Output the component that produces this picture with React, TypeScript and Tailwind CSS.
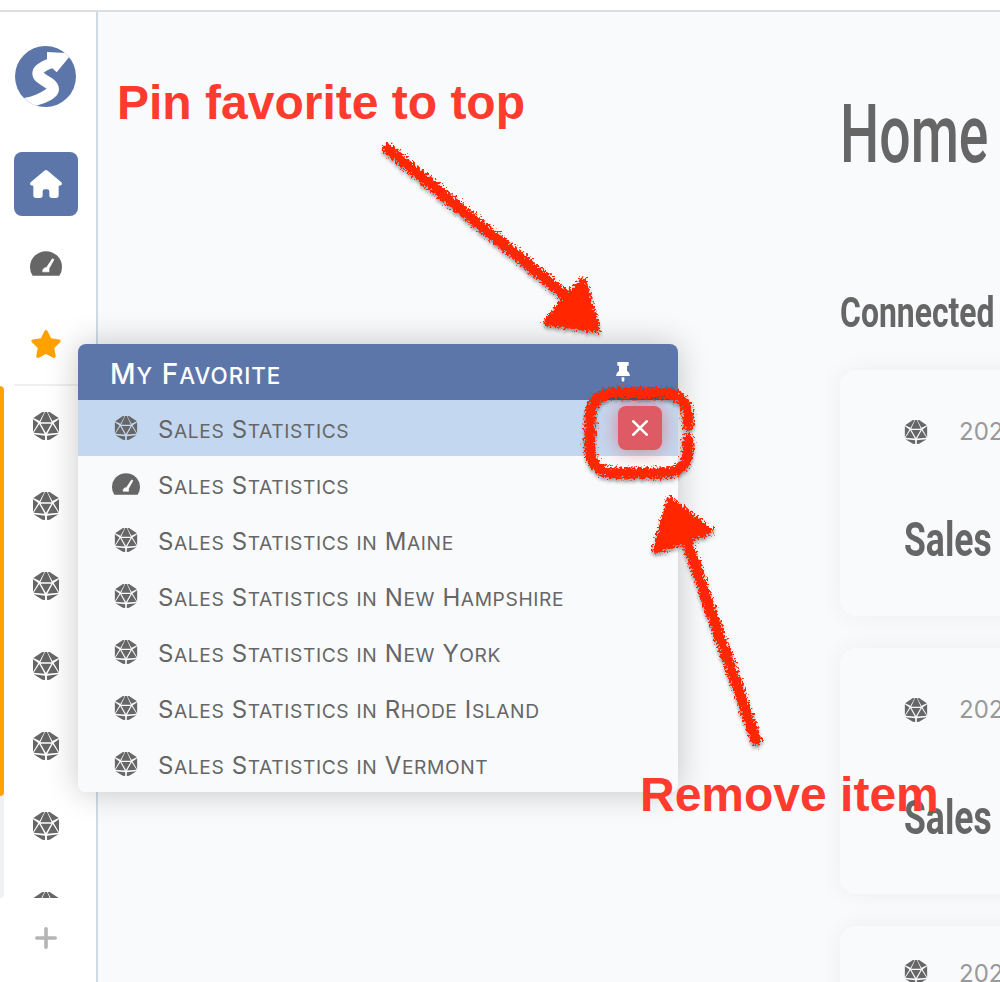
import React from "react";
import { FaStar } from "react-icons/fa";

function Logo() {
  return (
    <svg viewBox="0 0 183 183" className="h-[61px] w-[61px]">
      <defs>
        <clipPath id="disc"><circle cx="91.5" cy="91.5" r="91.5" /></clipPath>
      </defs>
      <g clipPath="url(#disc)">
        <rect width="183" height="183" fill="#5d76aa" />
        <path
          d="M27 156C52 151 74 143 95 128C70 112 52 104 52 82C52 60 76 48 96 40V18L152 21L185 0V20L162 34L125 79L112 67C103 70 94 74 86 80C108 96 132 104 132 130C132 155 98 170 65 179L60 200L0 180Z"
          fill="#fff"
        />
      </g>
    </svg>
  );
}

function HomeIcon() {
  return (
    <svg viewBox="0 0 96 84" className="h-7 w-8" fill="#fff">
      <path d="M43 2Q48 -2 53 2L94 37Q97 40 95 44Q93 47 86 47V76Q86 84 78 84H66Q58 84 58 76V64Q58 58 52 58H44Q38 58 38 64V76Q38 84 30 84H18Q10 84 10 76V47Q3 47 1 44Q-1 40 2 37Z" />
    </svg>
  );
}

const DICE_SIDE =
  "M28 0L34 1L20 27L1 18ZM0 22L16 33L0 60ZM19 36L35 65L2 62ZM2 67L36 71V84L28 83Z";

function Dice({ className }: { className: string }) {
  return (
    <svg viewBox="0 0 78 84" className={className} fill="#666">
      <path d="M36 0H42L56 31H22Z" />
      <path d="M23 35H55L39 63Z" />
      <path d={DICE_SIDE} />
      <path d={DICE_SIDE} transform="translate(78 0) scale(-1 1)" />
    </svg>
  );
}

function Gauge({ className }: { className: string }) {
  return (
    <svg viewBox="0 0 96 74" className={className}>
      <path d="M8 74Q0 62 0 48A48 48 0 0 1 96 48Q96 62 88 74Z" fill="#666" />
      <path d="M67 23L72 25L57 52V62H38Q37 54 44 50H49Z" fill="#fff" stroke="#fff" strokeWidth="2" strokeLinejoin="round" />
    </svg>
  );
}

function Pin() {
  return (
    <svg viewBox="0 0 42 60" className="h-5 w-3.5" fill="#fff">
      <path d="M4 0H38V11H33V26Q42 32 42 42H0Q0 32 9 26V11H4Z" />
      <path d="M17 46H25V56L21 60L17 56Z" />
    </svg>
  );
}

function SmallCaps({ text }: { text: string }) {
  return (
    <>
      {text.split(" ").map((word, i) => (
        <React.Fragment key={i}>
          {i > 0 && " "}
          <span
            className={
              word === "in"
                ? "inline-block text-[0.8em] uppercase"
                : "inline-block text-[0.8em] uppercase first-letter:text-[1.25em]"
            }
          >
            {word}
          </span>
        </React.Fragment>
      ))}
    </>
  );
}

const favorites = [
  "Sales Statistics",
  "Sales Statistics",
  "Sales Statistics in Maine",
  "Sales Statistics in New Hampshire",
  "Sales Statistics in New York",
  "Sales Statistics in Rhode Island",
  "Sales Statistics in Vermont",
];

function Sidebar() {
  return (
    <nav className="flex w-[98px] shrink-0 flex-col border-r-2 border-[#cfdae4] bg-white">
      <div className="flex h-[140px] pl-[15px] pt-[34px]"><Logo /></div>
      <div className="ml-3.5 flex h-16 w-16 items-center justify-center rounded-lg bg-[#5d76aa]"><HomeIcon /></div>
      <div className="ml-3.5 mt-4 flex h-16 w-16 items-center justify-center pb-px"><Gauge className="h-[25px] w-8" /></div>
      <div className="ml-3.5 mt-4 flex h-16 w-16 items-center justify-center"><FaStar className="h-7 w-[32px] text-[#ffa200]" /></div>
      <div className="ml-3.5 mt-2 h-0.5 bg-[#eff0f1]" />
      <div className="flex h-[512px] overflow-hidden">
        <div className="h-full w-1 shrink-0 overflow-hidden rounded-r bg-[#f0f1f3]">
          <div className="h-[410px] rounded-r bg-[#ffa200]" />
        </div>
        <div className="flex flex-col pl-2.5">
          {[0, 1, 2, 3, 4, 5, 6].map((i) => (
            <div key={i} className="flex h-20 w-16 shrink-0 items-center justify-center">
              <Dice className="h-7 w-[26px]" />
            </div>
          ))}
        </div>
      </div>
      <div className="ml-3.5 flex h-20 w-16 items-center justify-center">
        <svg viewBox="0 0 22 22" className="h-[22px] w-[22px]" stroke="#b5b5b5" strokeWidth="3.6" strokeLinecap="round">
          <path d="M11 1.8V20.2M1.8 11H20.2" />
        </svg>
      </div>
    </nav>
  );
}

function Card({ compact = false }: { compact?: boolean }) {
  return (
    <article
      className={`h-[246px] w-[600px] shrink-0 rounded-2xl bg-[#f9fafc] px-16 shadow-[0_0_24px_rgba(0,0,0,0.05)] ${compact ? "pt-[30px]" : "pt-[46px]"}`}
    >
      <div className="flex h-8 items-center gap-8">
        <Dice className="h-6 w-6" />
        <span className={`-ml-px font-[Inter,sans-serif] text-2xl text-[#999] ${compact ? "pt-[3px]" : ""}`}>2023</span>
      </div>
      <h3 className="mt-[60px] w-max origin-left scale-x-[0.725] whitespace-nowrap font-[Roboto,sans-serif] text-[49px] font-bold leading-[64px] text-[#666]">
        Sales
      </h3>
    </article>
  );
}

function FavoriteMenu() {
  return (
    <section className="absolute left-[78px] top-[344px] w-[600px] overflow-hidden rounded-lg bg-[#f9fafc] font-[Inter,sans-serif]">
      <header className="flex h-14 items-center justify-between bg-[#5d76aa] pl-8 pr-12 text-[28px] font-medium text-white">
        <span className="pt-1 tracking-[1px]"><SmallCaps text="My Favorite" /></span>
        <Pin />
      </header>
      <ul>
        {favorites.map((label, i) => (
          <li key={i} className={i === 0 ? "flex h-14 items-center bg-[#c3d8f0] pl-8 pr-4" : "flex h-14 items-center pl-8 pr-4"}>
            <span className="flex w-8 justify-center">
              {i === 1 ? <Gauge className="h-[22px] w-7" /> : <Dice className="h-6 w-6" />}
            </span>
            <span className="ml-4 grow whitespace-nowrap pt-[3px] text-2xl tracking-[0.6px] text-[#666]"><SmallCaps text={label} /></span>
            {i === 0 && (
              <button aria-label="Remove" className="flex h-11 w-11 items-center justify-center rounded-lg bg-[#de5b65] shadow-[0_0_20px_rgba(222,91,101,0.7)]">
                <svg viewBox="0 0 16 16" className="h-4 w-4" stroke="#fff" strokeWidth="2.6" strokeLinecap="round">
                  <path d="M1.3 1.3L14.7 14.7M14.7 1.3L1.3 14.7" />
                </svg>
              </button>
            )}
          </li>
        ))}
      </ul>
    </section>
  );
}

function Annotations() {
  return (
    <>
      <svg viewBox="0 0 1000 982" className="pointer-events-none absolute left-0 top-0 h-[982px] w-[1000px]">
        <defs>
          <filter id="crayon" filterUnits="userSpaceOnUse" x="370" y="130" width="420" height="640" colorInterpolationFilters="sRGB">
            <feTurbulence type="fractalNoise" baseFrequency="0.45" numOctaves="2" seed="4" result="noise" />
            <feDisplacementMap in="SourceGraphic" in2="noise" scale="11" xChannelSelector="R" yChannelSelector="G" result="rough" />
            <feDropShadow dx="0" dy="3" stdDeviation="1.8" floodColor="#000" floodOpacity="0.35" />
          </filter>
        </defs>
        <g filter="url(#crayon)" stroke="#ff2600" strokeLinecap="round" strokeLinejoin="round">
          <path d="M388 149L570 299" strokeWidth="11" />
          <path d="M583 281L597 329L547 322L566 299Z" fill="#ff2600" strokeWidth="7" />
          <path d="M756 740L688 545" strokeWidth="11" />
          <path d="M670 500L710 531L656 550Z" fill="#ff2600" strokeWidth="7" />
          <path
            d="M688 425V418Q688 393 661 393H616Q590 393 590 419V446Q590 473 616 473H662Q688 473 688 449V439"
            fill="none"
            strokeWidth="11"
          />
        </g>
      </svg>
      <p className="absolute left-[117px] top-[75px] whitespace-nowrap font-['Liberation_Sans',sans-serif] text-5xl font-bold leading-[55px] text-[#ff3b30]">
        Pin favorite to top
      </p>
      <p className="absolute left-[640px] top-[767px] whitespace-nowrap font-['Liberation_Sans',sans-serif] text-5xl font-bold leading-[55px] text-[#ff3b30]">
        Remove item
      </p>
    </>
  );
}

export default function App() {
  return (
    <div className="relative flex h-[982px] w-[1000px] flex-col overflow-hidden bg-[#f9fafc]">
      <div className="h-3 shrink-0 border-b-2 border-[#dcdddf] bg-white" />
      <div className="flex h-[970px]">
        <Sidebar />
        <main className="flex min-w-0 grow flex-col overflow-hidden pl-[742px]">
          <h1 className="mt-[75px] w-max origin-left scale-x-[0.683] font-[Roboto,sans-serif] text-[81px] font-medium leading-[96px] text-[#666]">Home</h1>
          <h2 className="mt-[101px] w-max origin-left scale-x-[0.742] whitespace-nowrap font-[Roboto,sans-serif] text-[43px] font-bold leading-[56px] text-[#666]">
            Connected
          </h2>
          <div className="mt-[30px] flex flex-col gap-8">
            <Card />
            <Card />
            <Card compact />
          </div>
        </main>
      </div>
      <div className="absolute left-[78px] top-[344px] h-[448px] w-[600px] rounded-lg shadow-[0_0_32px_rgba(0,0,0,0.22)]" />
      <FavoriteMenu />
      <Annotations />
    </div>
  );
}
